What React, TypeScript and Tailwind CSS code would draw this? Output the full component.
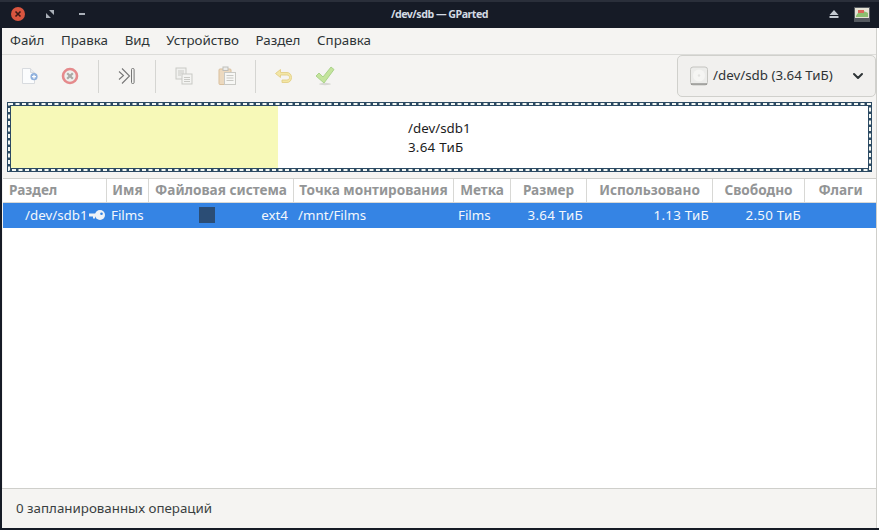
import { ChevronDown } from 'lucide-react'

const menus = ['Файл', 'Правка', 'Вид', 'Устройство', 'Раздел', 'Справка']

const columns = [
  { name: 'Раздел', width: 'w-[104px]', align: 'justify-start pl-[6px]' },
  { name: 'Имя', width: 'w-[42px]', align: 'justify-center' },
  { name: 'Файловая система', width: 'w-[145px]', align: 'justify-center' },
  { name: 'Точка монтирования', width: 'w-[160px]', align: 'justify-center' },
  { name: 'Метка', width: 'w-[57px]', align: 'justify-center' },
  { name: 'Размер', width: 'w-[76px]', align: 'justify-center' },
  { name: 'Использовано', width: 'w-[126px]', align: 'justify-center' },
  { name: 'Свободно', width: 'w-[92px]', align: 'justify-center' },
  { name: 'Флаги', width: 'flex-1', align: 'justify-center' },
]

function NewIcon() {
  return (
    <svg width="22" height="22" viewBox="0 0 22 22">
      <path d="M6.5 3.5h8l4 4v11h-12z" fill="#fbfcfd" stroke="#d8dbdf" />
      <path d="M14.5 3.5v4h4" fill="#e9ecef" stroke="#d8dbdf" />
      <circle cx="18" cy="11.7" r="3.6" fill="#8fb0dc" />
      <path d="M16 11.7h4M18 9.7v4" stroke="#fff" strokeWidth="1.2" />
    </svg>
  )
}

function DeleteIcon() {
  return (
    <svg width="18" height="18" viewBox="0 0 18 18">
      <circle cx="9" cy="9" r="7" fill="#eef0ee" stroke="#e58a8c" strokeWidth="2.6" />
      <path d="M6.2 6.2l5.6 5.6M11.8 6.2l-5.6 5.6" stroke="#a9a9a6" strokeWidth="2.2" />
    </svg>
  )
}

function ApplyAllIcon() {
  return (
    <svg width="18" height="18" viewBox="0 0 18 18" fill="none">
      <path d="M1 4.5l4.5 4-4.5 4M4 1.5l7.5 7.5-7.5 7.5" stroke="#777" strokeWidth="1.1" />
      <rect x="13.5" y="1.5" width="2.6" height="15" rx="1" fill="#f3f3f1" stroke="#777" strokeWidth="1" />
    </svg>
  )
}

function CopyIcon() {
  return (
    <svg width="18" height="18" viewBox="0 0 18 18">
      <rect x="1" y="1" width="10" height="11" fill="#f1f1ef" stroke="#c9c9c5" />
      <rect x="7" y="7" width="10" height="10" fill="#f4f4f2" stroke="#c9c9c5" />
      <path d="M3 4h6M3 6h6M3 8h3M9 10.5h6M9 12.5h6M9 14.5h6" stroke="#c9c9c5" />
    </svg>
  )
}

function PasteIcon() {
  return (
    <svg width="18" height="20" viewBox="0 0 18 20">
      <rect x="1" y="3" width="12" height="15.5" rx="1" fill="#ecd9bf" stroke="#d9bf9c" />
      <rect x="5" y="1" width="5" height="3.5" fill="#ececea" stroke="#bdbdb9" />
      <rect x="6.5" y="6.5" width="11" height="12" fill="#f7f7f5" stroke="#c9c9c5" />
      <path d="M8.5 9.5h7M8.5 12h7M8.5 14.5h7" stroke="#c9c9c5" />
    </svg>
  )
}

function UndoIcon() {
  return (
    <svg width="18" height="16" viewBox="0 0 18 16" fill="none">
      <path d="M6.5 1.5L1.5 5.5l5 4V7h6c2 0 3 1 3 2.5S14.5 12 12.5 12H8v2.5h5c2.5 0 4.5-2 4.5-5S15.5 4.5 13 4.5H6.5z" fill="#f3e6a6" stroke="#e3cf86" strokeWidth="0.9" />
    </svg>
  )
}

function CheckIcon() {
  return (
    <svg width="20" height="20" viewBox="0 0 20 20">
      <ellipse cx="10" cy="18" rx="6" ry="1.2" fill="#d8d8d4" />
      <path d="M1 10l3-3 4 4 8-10 3 2.5L9 17z" fill="#c4e49c" stroke="#a5cf85" strokeWidth="0.9" />
    </svg>
  )
}

function KeyIcon() {
  return (
    <svg width="16" height="11" viewBox="0 0 16 11" className="shrink-0">
      <circle cx="11" cy="5" r="5" fill="#eef2f7" />
      <circle cx="12.5" cy="3.8" r="1.3" fill="#3584e4" />
      <path d="M0 3.5h8v3H6V8.5H4V6.5H0z" fill="#eef2f7" />
    </svg>
  )
}

function DiskIcon() {
  return (
    <svg width="18" height="20" viewBox="0 0 18 20">
      <rect x="0.5" y="1" width="17" height="18" rx="2.5" fill="#ececea" stroke="#c4c4c0" />
      <circle cx="9" cy="9.5" r="6" fill="#f5f5f3" />
      <circle cx="9" cy="9.5" r="1.2" fill="#e2e2e0" />
      <path d="M1 17.5h16v1H1z" fill="#6e6e6a" />
    </svg>
  )
}

function Separator() {
  return <div className="w-px h-[33px] bg-[#d5d5d2]" />
}

export default function App() {
  return (
    <div className="w-[879px] h-[530px] bg-[#161b26] flex flex-col overflow-hidden text-[13.33px] text-[#2e3436] font-['Noto_Sans',sans-serif]">
      {/* Title bar */}
      <div className="h-[28px] shrink-0 border-t-2 border-[#2a2f3a] pb-[2px] flex items-center relative text-[#d3dae3]">
        <div className="ml-[11px] w-[14px] h-[14px] rounded-full bg-[#d9553f] flex items-center justify-center">
          <svg width="8" height="8" viewBox="0 0 8 8">
            <path d="M1.5 1.5l5 5M6.5 1.5l-5 5" stroke="#3a1a16" strokeWidth="1.6" />
          </svg>
        </div>
        <svg width="8" height="8" viewBox="0 0 8 8" className="ml-[21px]">
          <path d="M0 8V3l5 5zM8 0v5L3 0z" fill="#aab0b8" />
        </svg>
        <div className="ml-[25px] w-[6px] h-[2px] bg-[#aab0b8]" />
        <span className="absolute left-0 right-0 text-center font-bold text-[10.67px] tracking-[-0.5px]">/dev/sdb — GParted</span>
        <svg width="10" height="8" viewBox="0 0 10 8" className="ml-auto">
          <path d="M5 0l4.5 5H.5z M.5 6h9v2h-9z" fill="#c3c9d0" />
        </svg>
        <svg width="16" height="15" viewBox="0 0 16 15" className="ml-[15px] mr-[9px]">
          <rect x="0" y="0" width="16" height="15" fill="#555a60" />
          <rect x="1" y="1" width="14" height="10" fill="#e5e3d5" />
          <path d="M2 9c2-5 7-6 12-3v4H2z" fill="#8cc06f" />
          <path d="M4 3h6v3H4z" fill="#d9695a" />
        </svg>
      </div>

      <div className="flex-1 min-h-0 ml-[2px] mb-[2px] bg-white border-r-[2px] border-white flex flex-col">
        <div className="flex-1 min-h-0 bg-[#f5f4f2] border-r border-[#cfcfcb] flex flex-col">
          {/* Menu */}
          <div className="h-[27px] shrink-0 flex items-center gap-[16.6px] pl-[8px] border-b border-[#dcdcd9]">
            {menus.map((m) => (
              <span key={m}>{m}</span>
            ))}
          </div>

          {/* Toolbar */}
          <div className="h-[42px] shrink-0 flex items-center">
            <div className="w-[49px] flex justify-center"><NewIcon /></div>
            <div className="w-[37px] flex justify-center"><DeleteIcon /></div>
            <div className="ml-[10px]"><Separator /></div>
            <div className="w-[56px] flex justify-center"><ApplyAllIcon /></div>
            <Separator />
            <div className="w-[56px] flex justify-center"><CopyIcon /></div>
            <div className="w-[30px] flex justify-center"><PasteIcon /></div>
            <div className="ml-[13px]"><Separator /></div>
            <div className="w-[54px] flex justify-center"><UndoIcon /></div>
            <div className="w-[29px] flex justify-center"><CheckIcon /></div>
            <div className="ml-auto w-[199px] h-[42px] rounded-[5px] border border-[#d0d0cc] bg-[#f1f0ee] flex items-center pl-[12px] pr-[9px]">
              <DiskIcon />
              <span className="ml-[5px]">/dev/sdb (3.64 ТиБ)</span>
              <ChevronDown size={16} strokeWidth={3} className="ml-auto text-[#2e3436]" />
            </div>
          </div>

          {/* Disk graph */}
          <div className="mt-[5px] ml-[5px] mr-[4px] h-[70px] shrink-0 relative p-[4px]">
            <svg width="865" height="70" className="absolute left-0 top-0" fill="none">
              <rect x="2" y="2" width="861" height="66" stroke="#2c4a63" strokeWidth="4" />
              <rect x="2" y="2" width="861" height="66" stroke="#f4f8f4" strokeWidth="2" strokeDasharray="4 2.5" />
            </svg>
            <div className="h-full bg-white flex">
              <div className="w-[267px] bg-[#f7f9b8]" />
              <div className="pl-[130px] pt-[13px] leading-[19px] text-[#1c1c1c]">
                <div>/dev/sdb1</div>
                <div className="tracking-[0.25px]">3.64 ТиБ</div>
              </div>
            </div>
          </div>

          {/* Partition table */}
          <div className="mt-[6px] flex-1 min-h-0 bg-white flex flex-col border-t border-[#cfcfcb] ml-px">
            <div className="h-[24px] shrink-0 flex font-bold text-[13.6px] text-[#939596] bg-white border-b border-[#d8d8d5]">
              {columns.map((c, i) => (
                <div
                  key={c.name}
                  className={`${c.width} ${c.align} flex items-center ${i < columns.length - 1 ? 'border-r border-[#d8d8d5]' : ''}`}
                >
                  {c.name}
                </div>
              ))}
            </div>
            <div className="h-[25px] shrink-0 bg-[#3584e4] text-[#f3f7fc] flex items-center">
              <div className="w-[103px] pl-[22px] flex items-center gap-[1px]">
                <span>/dev/sdb1</span>
                <KeyIcon />
              </div>
              <div className="w-[42px] pl-[5px]">Films</div>
              <div className="w-[145px] flex items-center">
                <div className="ml-[51px] w-[16px] h-[16px] bg-[#2b4d75]" />
                <span className="ml-auto mr-[5px]">ext4</span>
              </div>
              <div className="w-[160px] pl-[5px]">/mnt/Films</div>
              <div className="w-[57px] pl-[5px]">Films</div>
              <div className="w-[76px] text-right pr-[3px] tracking-[0.25px]">3.64 ТиБ</div>
              <div className="w-[126px] text-right pr-[3px] tracking-[0.25px]">1.13 ТиБ</div>
              <div className="w-[92px] text-right pr-[3px] tracking-[0.25px]">2.50 ТиБ</div>
            </div>
            <div className="flex-1" />
          </div>

          {/* Status bar */}
          <div className="h-[40px] shrink-0 border-t border-[#cfcfcb] flex items-center pl-[14px] text-[#3a3f41]">
            0 запланированных операций
          </div>
        </div>
      </div>
    </div>
  )
}
